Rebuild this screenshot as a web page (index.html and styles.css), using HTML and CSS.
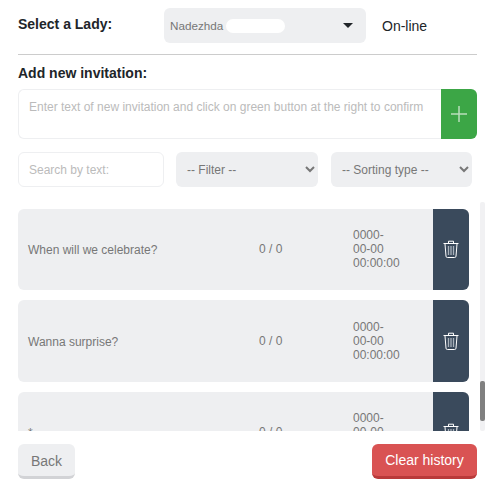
FILE: index.html
```html
<!DOCTYPE html>
<html lang="en">
<head>
    <meta charset="UTF-8">
    <meta name="viewport" content="width=device-width, initial-scale=1.0">
    <title>Invitations</title>
    <link rel="stylesheet" href="styles.css">
</head>
<body>
    <div class="page">
        <div class="lady-row">
            <label class="title lady-label">Select a Lady:</label>
            <div class="lady-select">
                <span class="lady-name">Nadezhda</span>
                <span class="lady-hidden"></span>
                <span class="caret"></span>
            </div>
            <span class="status">On-line</span>
        </div>
        <hr class="divider">
        <div class="title new-title">Add new invitation:</div>
        <div class="new-row">
            <textarea class="new-text" placeholder="Enter text of new invitation and click on green button at the right to confirm"></textarea>
            <button class="add-btn" type="button" aria-label="Add">
                <svg width="16" height="16" viewBox="0 0 16 16"><path d="M8 0v16M0 8h16" stroke="#b9deBc" stroke-width="1.5" fill="none"/></svg>
            </button>
        </div>
        <div class="filter-row">
            <input class="search" type="text" placeholder="Search by text:">
            <select class="filter">
                <option>-- Filter --</option>
            </select>
            <select class="sorting">
                <option>-- Sorting type --</option>
            </select>
        </div>
        <div class="list-wrap">
            <div class="list">
                <div class="item">
                    <div class="item-text">When will we celebrate?</div>
                    <div class="item-count">0 / 0</div>
                    <div class="item-date">0000-<br>00-00<br>00:00:00</div>
                    <button class="delete-btn" type="button" aria-label="Delete">
                        <svg width="16" height="18" viewBox="0 0 16 18"><path d="M.5 3.5h15M5.5 3V1.2h5V3M2 4l1 12.2q.1 1.3 1.4 1.3h7.2q1.3 0 1.4-1.3L14 4" stroke="#fff" fill="none"/><path d="M5.5 6v9M8 6v9M10.5 6v9" stroke="#a9b2bc" stroke-width="1.3" fill="none"/></svg>
                    </button>
                </div>
                <div class="item">
                    <div class="item-text">Wanna surprise?</div>
                    <div class="item-count">0 / 0</div>
                    <div class="item-date">0000-<br>00-00<br>00:00:00</div>
                    <button class="delete-btn" type="button" aria-label="Delete">
                        <svg width="16" height="18" viewBox="0 0 16 18"><path d="M.5 3.5h15M5.5 3V1.2h5V3M2 4l1 12.2q.1 1.3 1.4 1.3h7.2q1.3 0 1.4-1.3L14 4" stroke="#fff" fill="none"/><path d="M5.5 6v9M8 6v9M10.5 6v9" stroke="#a9b2bc" stroke-width="1.3" fill="none"/></svg>
                    </button>
                </div>
                <div class="item">
                    <div class="item-text">*</div>
                    <div class="item-count">0 / 0</div>
                    <div class="item-date">0000-<br>00-00<br>00:00:00</div>
                    <button class="delete-btn" type="button" aria-label="Delete">
                        <svg width="16" height="18" viewBox="0 0 16 18"><path d="M.5 3.5h15M5.5 3V1.2h5V3M2 4l1 12.2q.1 1.3 1.4 1.3h7.2q1.3 0 1.4-1.3L14 4" stroke="#fff" fill="none"/><path d="M5.5 6v9M8 6v9M10.5 6v9" stroke="#a9b2bc" stroke-width="1.3" fill="none"/></svg>
                    </button>
                </div>
            </div>
            <div class="scroll-track">
                <div class="scroll-thumb"></div>
            </div>
        </div>
        <div class="footer">
            <button class="back-btn" type="button">Back</button>
            <button class="clear-btn" type="button">Clear history</button>
        </div>
    </div>
</body>
</html>
```

FILE: styles.css
```css
* {
    box-sizing: border-box;
}
body {
    margin: 0;
    background: white;
    font-family: "Liberation Sans", Arial, sans-serif;
    font-size: 14px;
    color: #212529;
    overflow: hidden;
}
button {
    font-family: inherit;
    border: none;
    cursor: pointer;
}
.page {
    padding: 8px 19px 0 18px;
}
.title {
    font-weight: bold;
    font-size: 14px;
    line-height: 16px;
}
.lady-row {
    display: flex;
    align-items: center;
    height: 35px;
}
.lady-label {
    width: 146px;
    margin-top: -3px;
}
.lady-select {
    display: flex;
    align-items: center;
    width: 202px;
    height: 35px;
    padding: 0 13px 0 6px;
    background: #eeeff1;
    border-radius: 6px;
    font-size: 11.7px;
    color: #777;
}
.lady-hidden {
    width: 59px;
    height: 14px;
    margin-left: 3px;
    background: white;
    border-radius: 7px;
}
.caret {
    margin-left: auto;
    border-top: 5px solid #212529;
    border-left: 5px solid transparent;
    border-right: 5px solid transparent;
}
.status {
    margin-left: 16px;
}
.divider {
    height: 1px;
    margin: 11px 0 10px;
    border: none;
    background: #ccc;
}
.new-title {
    margin-bottom: 8px;
}
.new-row {
    display: flex;
    height: 50px;
}
.new-text {
    flex: 1;
    padding: 10px;
    border: 1px solid #eeeff1;
    border-right: none;
    border-radius: 6px 0 0 6px;
    font-family: inherit;
    font-size: 12px;
    line-height: 14px;
    resize: none;
    outline: none;
}
.new-text::placeholder,
.search::placeholder {
    color: #bbb;
    opacity: 1;
}
.add-btn {
    display: flex;
    align-items: center;
    justify-content: center;
    width: 36px;
    padding: 0;
    background: #3ca646;
    border-radius: 0 6px 6px 0;
}
.filter-row {
    display: flex;
    height: 35px;
    margin-top: 13px;
}
.search {
    width: 146px;
    padding: 0 10px;
    border: 1px solid #eeeff1;
    border-radius: 6px;
    font-family: inherit;
    font-size: 12px;
    outline: none;
}
.filter,
.sorting {
    padding: 0 7px;
    border: none;
    border-radius: 6px;
    background-color: #eeeff1;
    font-family: inherit;
    font-size: 12px;
    color: #777;
}
.filter {
    width: 142px;
    margin-left: 12px;
}
.sorting {
    width: 141px;
    margin-left: 13px;
}
.list-wrap {
    display: flex;
    justify-content: space-between;
    height: 229px;
    margin-top: 15px;
    margin-right: -8px;
}
.list {
    display: flex;
    flex-direction: column;
    gap: 10px;
    width: 451px;
    padding-top: 7px;
    overflow: hidden;
}
.item {
    display: flex;
    flex-shrink: 0;
    align-items: center;
    height: 81.4px;
    padding-left: 10px;
    background: #eeeff1;
    border-radius: 6px;
    font-size: 12px;
    line-height: 14px;
    color: #777;
}
.item-text {
    width: 231px;
    margin-top: 1px;
}
.item-count {
    width: 94px;
    margin-bottom: 1px;
}
.item-date {
    flex: 1;
    margin-bottom: 1px;
}
.delete-btn {
    display: flex;
    align-items: center;
    justify-content: center;
    align-self: stretch;
    width: 36px;
    padding: 0 0 1px;
    background: #3a4a5c;
    border-radius: 0 6px 6px 0;
}
.scroll-track {
    width: 5px;
    background: #f1f1f3;
    border-radius: 2px;
}
.scroll-thumb {
    width: 5px;
    height: 40px;
    margin-top: 179px;
    background: #808080;
    border-radius: 2px;
}
.footer {
    display: flex;
    justify-content: space-between;
    margin-top: 13px;
}
.back-btn,
.clear-btn {
    height: 35px;
    border-radius: 6px;
    font-size: 14px;
}
.back-btn {
    width: 57px;
    padding-top: 3px;
    background: #eeeff1;
    border-bottom: 3px solid #d2d3d6;
    color: #777;
}
.clear-btn {
    width: 105px;
    background: #d95353;
    border-bottom: 3px solid #b93a3a;
    color: white;
}
```
